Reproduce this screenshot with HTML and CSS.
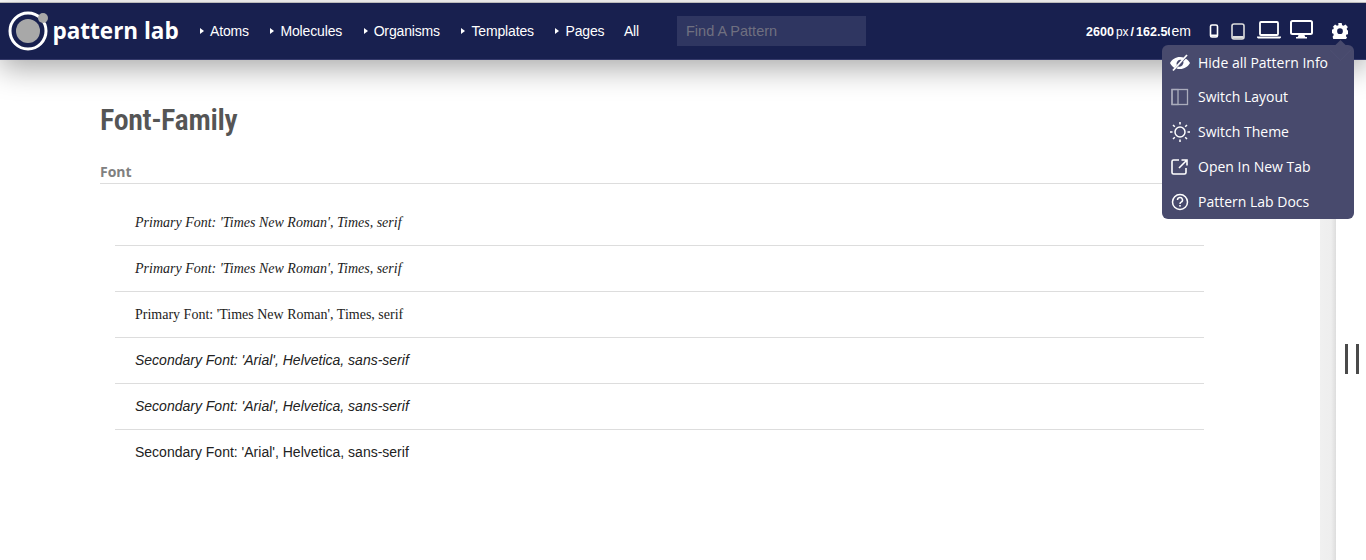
FILE: index.html
```html
<!DOCTYPE html>
<html lang="en">
<head>
<meta charset="utf-8">
<title>Pattern Lab</title>
<link rel="stylesheet" href="styles.css">
</head>
<body>
<header class="topbar">
  <a class="logo">
    <svg class="logo-mark" width="42" height="42" viewBox="0 0 42 42"><circle cx="20" cy="22" r="18" fill="none" stroke="#fff" stroke-width="3"/><circle cx="20" cy="22" r="12" fill="#a8a8a8"/><circle cx="35" cy="9" r="5" fill="#a8a8a8"/></svg>
    <span class="logo-text">pattern lab</span>
  </a>
  <nav class="nav">
    <a class="nav-item has-caret">Atoms</a>
    <a class="nav-item has-caret">Molecules</a>
    <a class="nav-item has-caret">Organisms</a>
    <a class="nav-item has-caret">Templates</a>
    <a class="nav-item has-caret">Pages</a>
    <a class="nav-item nav-all">All</a>
  </nav>
  <div class="search">Find A Pattern</div>
  <div class="tools">
    <div class="size"><b>2600</b><span class="unit">px</span><b class="slash">/</b><b class="clip">162.50</b><span class="unit em">em</span></div>
    <svg class="ic-phone" width="10" height="14" viewBox="0 0 10 14"><rect x="1.500" y="1" width="7" height="12" rx="1.500" fill="none" stroke="#fff" stroke-width="1.600"/><rect x="2" y="10.500" width="6" height="2" fill="#fff"/></svg>
    <svg class="ic-tablet" width="14" height="17" viewBox="0 0 14 17"><rect x="1" y="1" width="12" height="15" rx="2" fill="none" stroke="#ddd" stroke-width="1.600"/><rect x="1.500" y="13" width="11" height="2.500" fill="#ddd"/></svg>
    <svg class="ic-laptop" width="24" height="18" viewBox="0 0 24 18"><rect x="3" y="1" width="18" height="13" rx="1" fill="none" stroke="#fff" stroke-width="1.800"/><path d="M0 15.500h24v1l-1 1H1l-1-1z" fill="#fff"/></svg>
    <svg class="ic-desktop" width="23" height="19" viewBox="0 0 23 19"><rect x="1" y="1" width="21" height="13" rx="1.500" fill="none" stroke="#fff" stroke-width="2"/><path d="M8.500 15h6l1 2.500h-8z" fill="#fff"/><rect x="6" y="17" width="11" height="1.500" fill="#fff"/></svg>
    <svg class="ic-gear" width="16" height="16" viewBox="0 0 24 24"><path fill="#fff" fill-rule="evenodd" d="M9.500 0h5l.7 3.300 2.200.9L20.300 2.400l3.500 3.500-1.800 2.900.9 2.200 2.100.5v5l-3.300.7-.9 2.200 1.800 2.900-3.500 3.500-2.900-1.800-2.200.9-.7 3.300h-5l-.7-3.300-2.200-.9-2.900 1.800L.9 20.800l1.800-2.900-.9-2.200L-1 15v-5l3-.7.900-2.200L1.100 5.900l3.500-3.500 2.900 1.800 2.200-.9zM12 8a4.300 4.300 0 1 0 0 8.600A4.300 4.300 0 0 0 12 8z"/></svg>
  </div>
</header>

<div class="menu">
  <a class="menu-item"><svg width="20" height="18" viewBox="0 0 20 18"><path fill="#fff" d="M0 9c2-3.500 5.500-6 10-6 1.500 0 2.800.3 4 .8L12 6a4 4 0 0 0-5.200 5.300L4.400 14C2.600 12.800 1 11 0 9zm20 0c-2 3.500-5.500 6-10 6-1.300 0-2.500-.2-3.600-.6L8.300 12.400A4 4 0 0 0 13.300 7.200L15.800 4.800C17.500 5.800 19 7.200 20 9z"/><path d="M3 16.500 17 1" stroke="#fff" stroke-width="1.800"/></svg><span>Hide all Pattern Info</span></a>
  <a class="menu-item"><svg width="20" height="18" viewBox="0 0 20 18"><rect x="2" y="1.500" width="15.500" height="15" fill="none" stroke="#aaacbc" stroke-width="1.300"/><rect x="2" y="1.500" width="6" height="15" fill="none" stroke="#aaacbc" stroke-width="1.300"/></svg><span>Switch Layout</span></a>
  <a class="menu-item"><svg width="20" height="20" viewBox="0 0 20 20"><circle cx="10" cy="10" r="5" fill="none" stroke="#fff" stroke-width="1.500"/><path d="M10 0v2.500M10 17.500V20M0 10h2.500M17.500 10H20M3 3l1.800 1.800M15.200 15.200 17 17M17 3l-1.800 1.800M4.800 15.200 3 17" stroke="#fff" stroke-width="1.500"/></svg><span>Switch Theme</span></a>
  <a class="menu-item"><svg width="20" height="18" viewBox="0 0 20 18"><path d="M9 2H3.500A1.500 1.500 0 0 0 2 3.500v11A1.500 1.500 0 0 0 3.500 16h11a1.500 1.500 0 0 0 1.500-1.500V10" fill="none" stroke="#fff" stroke-width="1.600"/><path d="M11.500 2H17v5.500M17 2 9 10" fill="none" stroke="#fff" stroke-width="1.600"/></svg><span>Open In New Tab</span></a>
  <a class="menu-item"><svg width="20" height="18" viewBox="0 0 20 18"><circle cx="10" cy="9" r="7.500" fill="none" stroke="#fff" stroke-width="1.500"/><path d="M7.500 7a2.500 2.500 0 1 1 3.600 2.200c-.8.400-1.100 1-1.100 1.800" fill="none" stroke="#fff" stroke-width="1.500"/><rect x="9.200" y="12" width="1.600" height="1.600" fill="#fff"/></svg><span>Pattern Lab Docs</span></a>
</div>

<div class="stage">
  <main class="content">
    <h1 class="title">Font-Family</h1>
    <h2 class="section">Font</h2>
    <ul class="list">
      <li class="row serif italic">Primary Font: 'Times New Roman', Times, serif</li>
      <li class="row serif italic">Primary Font: 'Times New Roman', Times, serif</li>
      <li class="row serif">Primary Font: 'Times New Roman', Times, serif</li>
      <li class="row sans italic">Secondary Font: 'Arial', Helvetica, sans-serif</li>
      <li class="row sans italic">Secondary Font: 'Arial', Helvetica, sans-serif</li>
      <li class="row sans">Secondary Font: 'Arial', Helvetica, sans-serif</li>
    </ul>
  </main>
  <div class="strip"></div>
  <div class="grip"><i></i><i></i></div>
</div>
</body>
</html>
```
FILE: styles.css
```css
* { box-sizing: border-box; }
html, body { margin: 0; height: 560px; overflow: hidden; background: #fff; }
body { padding-top: 2px; font-family: "Liberation Sans", Arial, sans-serif; position: relative; }
a { color: inherit; text-decoration: none; }

.topbar {
  height: 58px;
  display: flex;
  align-items: center;
  background: #18204f;
  border-top: 1px solid #bbb;
  border-bottom: 1px solid #34396a;
  box-shadow: 0 8px 30px rgba(0, 0, 0, .35);
  color: #fff;
  position: relative;
  z-index: 2;
}
.logo { display: flex; align-items: center; width: 200px; padding-left: 7.5px; }
.logo-mark { flex: none; margin-right: 3px; margin-top: -2px; }
.logo-text { font: 700 22.5px "Open Sans", sans-serif; margin-top: -2px; }
.nav { display: flex; gap: 21.5px; font-size: 14px; letter-spacing: -.15px; }
.nav-item { display: block; }
.nav-all { margin-left: -2px; }
.has-caret { display: flex; align-items: center; }
.has-caret::before {
  content: "";
  width: 0; height: 0;
  margin-right: 6px;
  border-left: 4px solid #fff;
  border-top: 3px solid transparent;
  border-bottom: 3px solid transparent;
}
.search {
  margin-left: 38px;
  width: 189px;
  height: 30px;
  padding-left: 9px;
  line-height: 30px;
  font-size: 14.5px;
  background: #2f3661;
  color: #6f7080;
}
.tools { margin-left: auto; display: flex; align-items: center; padding-right: 18px; }
.size { display: flex; align-items: baseline; font-size: 12.5px; margin-right: 17.5px; }
.unit { font-size: 12px; margin-left: 2px; }
.slash { margin: 0 2px; }
.clip { width: 34px; overflow: hidden; white-space: nowrap; }
.em { margin-left: 1.500px; font-size: 14px; }
.ic-phone { margin-right: 12px; }
.ic-tablet { margin-right: 12.500px; }
.ic-laptop { margin-right: 9px; margin-top: -2px; }
.ic-desktop { margin-right: 19px; margin-top: -3px; }
.ic-gear { flex: none; }

.menu {
  position: absolute;
  z-index: 3;
  left: 1162px;
  top: 45px;
  width: 192px;
  height: 174px;
  background: #484a6d;
  border-radius: 6px;
  color: #fff;
  font: 14px "Open Sans", sans-serif;
}
.menu::before {
  content: "";
  position: absolute;
  left: 171px;
  top: -2px;
  width: 14px;
  height: 14px;
  transform: rotate(45deg);
  background: #484a6d;
  border-right: 1px solid #4d4f72;
  border-bottom: 1px solid #4d4f72;
}
.menu-item { display: flex; align-items: center; height: 35px; padding-left: 8px; position: relative; }
.menu-item:first-child { height: 34px; padding-top: 1px; }
.menu-item svg { flex: none; margin-right: 8px; }

.stage { display: flex; height: 501px; }
.content { flex: none; width: 1320px; padding: 0 116px 0 100px; }
.title {
  margin: 42px 0 0;
  font: 600 30px/36px Roboto, sans-serif;
  font-stretch: condensed;
  letter-spacing: -.35px;
  color: #555;
}
.section {
  margin: 24px 0 0;
  padding-bottom: 2px;
  font: 700 14px/19px "Open Sans", sans-serif;
  color: #808080;
  border-bottom: 1px solid #ddd;
}
.list { list-style: none; margin: 16px 0 0 15px; padding: 0; }
.row { height: 46px; line-height: 45px; padding-left: 20px; font-size: 14px; color: #222; border-bottom: 1px solid #ddd; }
.row:last-child { border-bottom: 0; }
.serif { font-family: "Liberation Serif", "Times New Roman", serif; }
.sans { font-family: "Liberation Sans", Arial, sans-serif; }
.italic { font-style: italic; }

.strip {
  flex: none;
  width: 16px;
  background: linear-gradient(to right, #f0f0f0 0, #eee 11px, #ddd 16px);
}
.grip { flex: 1; display: flex; gap: 8px; padding: 284px 0 0 9px; }
.grip i { display: block; width: 3px; height: 30px; background: #4a4a4a; }
```
